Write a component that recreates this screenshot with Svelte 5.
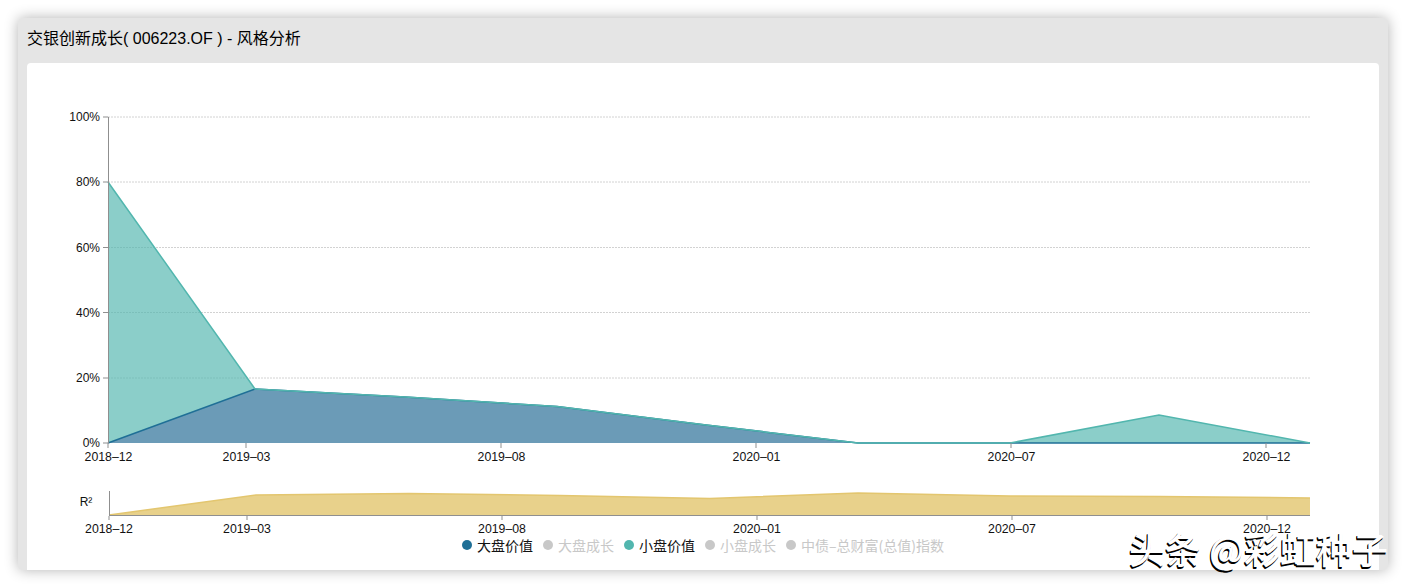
<script lang="ts">
    const yTicks = [
        { label: "100%", y: 117 },
        { label: "80%", y: 182 },
        { label: "60%", y: 247.5 },
        { label: "40%", y: 312.5 },
        { label: "20%", y: 378 },
        { label: "0%", y: 443 },
    ];
    const xTicks = [
        { label: "2018–12", x: 108 },
        { label: "2019–03", x: 246 },
        { label: "2019–08", x: 501 },
        { label: "2020–01", x: 756 },
        { label: "2020–07", x: 1011 },
        { label: "2020–12", x: 1266 },
    ];
    const greenTop = "108,182 255,389 405,397 557,406.5 706,425 858,443 1010,443 1159,415 1310,443";
    const blueTop = "108,443 255,389 405,397 557,406.5 706,425 858,443 1010,443 1159,443 1310,443";
    const goldTop = "109,515 256,495 409,493.5 560,495.5 710,498.5 858,493 1010,496 1159,496.5 1310,498";
    const blueBack = "1310,443 1159,443 1010,443 858,443 706,425 557,406.5 405,397 255,389 108,443";
    const legend = [
        { name: "大盘价值", color: "#1f6f96", on: true },
        { name: "大盘成长", color: "#c8c8c8", on: false },
        { name: "小盘价值", color: "#52b6ae", on: true },
        { name: "小盘成长", color: "#c8c8c8", on: false },
        { name: "中债–总财富(总值)指数", color: "#c8c8c8", on: false },
    ];
</script>

<main>
    <section class="panel">
        <h2>交银创新成长( 006223.OF ) - 风格分析</h2>
        <div class="card">
            <svg viewBox="27 63 1352 472" width="1352" height="472">
                {#each yTicks as t}
                    {#if t.y !== 443}
                        <line x1="108" x2="1310" y1={t.y} y2={t.y} class="grid" />
                    {/if}
                    <line x1="103" x2="108" y1={t.y} y2={t.y} class="axis" />
                    <text x="100" y={t.y + 4} text-anchor="end">{t.label}</text>
                {/each}

                <polygon points="{greenTop} {blueBack}" fill="#52b6ae" fill-opacity="0.67" />
                <polygon points="{blueTop} 1310,443 108,443" fill="#1c6590" fill-opacity="0.65" />
                <polyline points={blueTop} class="line" stroke="#1f6f96" />
                <polyline points={greenTop} class="line" stroke="#52b6ae" />

                <line x1="108.5" x2="108.5" y1="117" y2="443" class="axis" />
                {#each xTicks as t}
                    <line x1={t.x} x2={t.x} y1="443" y2="448" class="axis" />
                    <text class="date" x={t.x + 0.5} y="461" text-anchor="middle">{t.label}</text>
                {/each}

                <text x="86" y="506" text-anchor="middle">R²</text>
                <polygon points="{goldTop} 1310,516 109,516" fill="#e8d18b" />
                <polyline points={goldTop} class="line" stroke="#e3c66f" />
                <line x1="109.5" x2="109.5" y1="491" y2="516" class="axis" />
                <line x1="109" x2="1310" y1="515.5" y2="515.5" class="axis" />
                {#each xTicks as t, i}
                    <line x1={i === 0 ? 109 : t.x + 1} x2={i === 0 ? 109 : t.x + 1} y1="516" y2="520" class="axis" />
                    <text class="date" x={i === 0 ? 109 : t.x + 1} y="533" text-anchor="middle">{t.label}</text>
                {/each}
            </svg>
            <ul class="legend">
                {#each legend as item}
                    <li class:off={!item.on}>
                        <span class="dot" style="background: {item.color}"></span>{item.name}
                    </li>
                {/each}
            </ul>
            <div class="watermark">头条 @彩虹种子</div>
        </div>
    </section>
</main>

<style>
    :global(body) {
        margin: 0;
        background: #fff;
    }

    main {
        width: 1406px;
        height: 588px;
        padding: 18px;
        box-sizing: border-box;
        overflow: hidden;
    }

    .panel {
        height: 552px;
        background: #e5e5e5;
        border-radius: 5px;
        box-shadow: 0 0 14px rgba(0, 0, 0, 0.3);
        padding: 0 9px;
        box-sizing: border-box;
        display: flex;
        flex-direction: column;
    }

    h2 {
        margin: 0;
        height: 45px;
        line-height: 41px;
        font-size: 16px;
        font-weight: 400;
        color: #000;
        font-family: "Liberation Sans", "Noto Sans CJK SC", sans-serif;
    }

    .card {
        position: relative;
        flex: 1;
        background: #fff;
        border-radius: 4px 4px 0 0;
    }

    svg {
        display: block;
    }

    text {
        font-family: "Liberation Sans", "Noto Sans CJK SC", sans-serif;
        font-size: 12px;
        fill: #111;
    }

    .date {
        font-size: 12.3px;
    }

    .grid {
        stroke: #d2d2d2;
        stroke-width: 1;
        stroke-dasharray: 2 1;
    }

    .axis {
        stroke: #8f8f8f;
        stroke-width: 1;
    }

    .line {
        fill: none;
        stroke-width: 1.5;
    }

    .legend {
        display: flex;
        justify-content: center;
        gap: 10px;
        margin: 0;
        padding: 0;
        list-style: none;
        font-family: "Noto Sans CJK SC", "Liberation Sans", sans-serif;
        font-size: 14px;
        line-height: 20px;
        color: #111;
    }

    .legend li {
        display: flex;
        align-items: center;
        gap: 5px;
    }

    .legend li.off {
        color: #c8c8c8;
    }

    .dot {
        width: 10px;
        height: 10px;
        border-radius: 50%;
    }

    .watermark {
        position: absolute;
        right: -9px;
        bottom: 1px;
        font-family: "Noto Sans CJK SC", sans-serif;
        font-size: 36px;
        font-weight: 500;
        line-height: 42px;
        color: #fff;
        text-shadow: -1px 1px 0 #000, -1px 2px 0 #000;
        white-space: nowrap;
    }
</style>
